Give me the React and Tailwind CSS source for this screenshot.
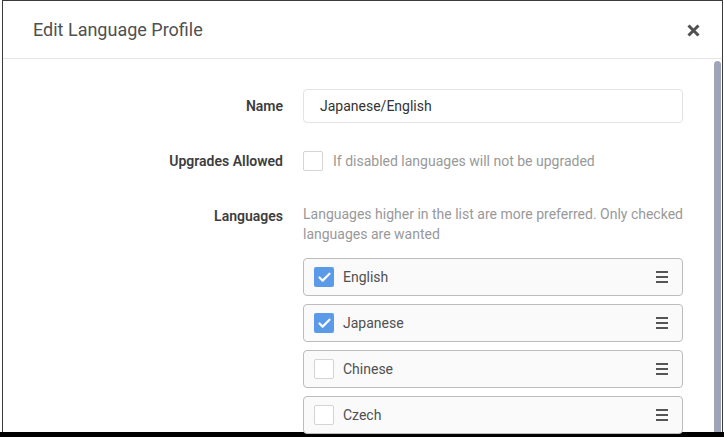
import { Check } from 'lucide-react';

const LANGS = [
  { name: 'English', checked: true },
  { name: 'Japanese', checked: true },
  { name: 'Chinese', checked: false },
  { name: 'Czech', checked: false },
];

function Grip() {
  return (
    <div className="flex flex-col gap-[3px] w-[12px]">
      <span className="block h-[2px] bg-[#555]" />
      <span className="block h-[2px] bg-[#555]" />
      <span className="block h-[2px] bg-[#555]" />
    </div>
  );
}

function Box({ checked }) {
  if (checked) {
    return (
      <div className="w-[20px] h-[20px] rounded-[2px] bg-[#5b9ae8] flex items-center justify-center shrink-0">
        <Check size={15} strokeWidth={3.5} color="#fff" />
      </div>
    );
  }
  return <div className="w-[20px] h-[20px] rounded-[2px] border border-[#d4d4d4] bg-white shrink-0" />;
}

export default function App() {
  return (
    <div className="w-[724px] h-[437px] bg-white overflow-hidden" style={{ fontFamily: 'Roboto, "Liberation Sans", sans-serif' }}>
      <div className="ml-[2px] w-[721px] h-[432px] border-l border-t border-r border-[#3a3a3a] flex flex-col">
        {/* header */}
        <div className="h-[58px] shrink-0 border-b border-[#e5e5e5] flex items-center justify-between pl-[30px] pr-[22px]">
          <h2 className="text-[18px] text-[#505050] leading-none">Edit Language Profile</h2>
          <svg width="13" height="13" viewBox="0 0 13 13" className="mt-[1px]">
            <path d="M1.5 1.5 L11.5 11.5 M11.5 1.5 L1.5 11.5" stroke="#505050" strokeWidth="3" />
          </svg>
        </div>

        {/* body */}
        <div className="flex flex-1 min-h-0">
          <div className="flex-1 text-[14px]">
            <div className="flex items-center mt-[30px] h-[34px]">
              <div className="w-[300px] pr-[20px] text-right font-semibold text-[#3d3d3d]">Name</div>
              <div className="w-[380px] h-[34px] border border-[#e3e3e3] rounded-[4px] flex items-center pl-[16px] text-[#333]">
                Japanese/English
              </div>
            </div>

            <div className="flex items-center mt-[28px] h-[20px]">
              <div className="w-[300px] pr-[20px] text-right font-semibold text-[#3d3d3d]">Upgrades Allowed</div>
              <Box checked={false} />
              <span className="ml-[10px] text-[#999]">If disabled languages will not be upgraded</span>
            </div>

            <div className="flex items-start mt-[33px]">
              <div className="w-[300px] pr-[20px] pt-[2px] leading-[20px] text-right font-semibold text-[#3d3d3d]">Languages</div>
              <div className="w-[380px]">
                <p className="leading-[20px] text-[#999]">
                  Languages higher in the list are more preferred. Only checked languages are wanted
                </p>
                <div className="mt-[14px] flex flex-col gap-[8px]">
                  {LANGS.map(l => (
                    <div key={l.name} className="h-[38px] shrink-0 border border-[#bcbcbc] rounded-[4px] bg-[#fafafa] flex items-center pl-[10px] pr-[14px]">
                      <Box checked={l.checked} />
                      <span className="ml-[9px] flex-1 text-[#505050]">{l.name}</span>
                      <Grip />
                    </div>
                  ))}
                </div>
              </div>
            </div>
          </div>

          {/* scrollbar */}
          <div className="w-[8px] shrink-0 pt-[2px]">
            <div className="h-full w-[7px] rounded-t-[4px] bg-[#a1a4b9]" />
          </div>
        </div>
      </div>
      <div className="h-[5px] bg-black" />
    </div>
  );
}
